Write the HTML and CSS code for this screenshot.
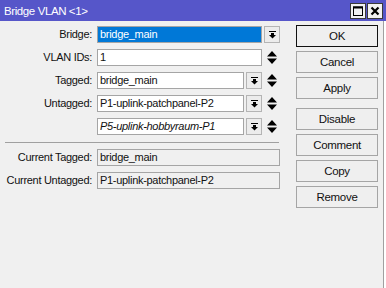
FILE: index.html
```html
<!DOCTYPE html>
<html>
<head>
<meta charset="utf-8">
<link rel="stylesheet" href="styles.css">
</head>
<body>
<div class="window">
  <div class="titlebar">
    <span class="title">Bridge VLAN &lt;1&gt;</span>
    <div class="tbtns">
      <span class="tbtn"><svg width="10" height="10" viewBox="0 0 10 10"><rect x="0.5" y="1" width="9" height="8.5" fill="none" stroke="#000" stroke-width="1"/><rect x="0" y="0.5" width="10" height="2" fill="#000"/></svg></span>
      <span class="tbtn"><svg width="10" height="10" viewBox="0 0 10 10"><path d="M1.5 1.5 L8.5 8.5 M8.5 1.5 L1.5 8.5" stroke="#000" stroke-width="2.2"/></svg></span>
    </div>
  </div>
  <div class="body">
    <div class="form">
      <div class="row">
        <span class="lbl">Bridge:</span>
        <div class="ctrl">
          <div class="field sel">bridge_main</div>
          <span class="dd"><svg width="7" height="8" viewBox="0 0 7 8"><rect x="0" y="0" width="7" height="1" fill="#000"/><rect x="2" y="2" width="3" height="2" fill="#000"/><path d="M0 4 H7 L3.5 7.5 Z" fill="#000"/></svg></span>
        </div>
      </div>
      <div class="row">
        <span class="lbl">VLAN IDs:</span>
        <div class="ctrl">
          <div class="field">1</div>
          <span class="spin"><svg width="10" height="13" viewBox="0 0 10 13"><path d="M0 5.5 L5 0 L10 5.5 Z M0 7.5 L10 7.5 L5 13 Z" fill="#000"/></svg></span>
        </div>
      </div>
      <div class="row">
        <span class="lbl">Tagged:</span>
        <div class="ctrl">
          <div class="field">bridge_main</div>
          <span class="dd"><svg width="7" height="8" viewBox="0 0 7 8"><rect x="0" y="0" width="7" height="1" fill="#000"/><rect x="2" y="2" width="3" height="2" fill="#000"/><path d="M0 4 H7 L3.5 7.5 Z" fill="#000"/></svg></span>
          <span class="spin"><svg width="10" height="13" viewBox="0 0 10 13"><path d="M0 5.5 L5 0 L10 5.5 Z M0 7.5 L10 7.5 L5 13 Z" fill="#000"/></svg></span>
        </div>
      </div>
      <div class="row">
        <span class="lbl">Untagged:</span>
        <div class="ctrl">
          <div class="field">P1-uplink-patchpanel-P2</div>
          <span class="dd"><svg width="7" height="8" viewBox="0 0 7 8"><rect x="0" y="0" width="7" height="1" fill="#000"/><rect x="2" y="2" width="3" height="2" fill="#000"/><path d="M0 4 H7 L3.5 7.5 Z" fill="#000"/></svg></span>
          <span class="spin"><svg width="10" height="13" viewBox="0 0 10 13"><path d="M0 5.5 L5 0 L10 5.5 Z M0 7.5 L10 7.5 L5 13 Z" fill="#000"/></svg></span>
        </div>
      </div>
      <div class="row">
        <span class="lbl"></span>
        <div class="ctrl">
          <div class="field italic">P5-uplink-hobbyraum-P1</div>
          <span class="dd"><svg width="7" height="8" viewBox="0 0 7 8"><rect x="0" y="0" width="7" height="1" fill="#000"/><rect x="2" y="2" width="3" height="2" fill="#000"/><path d="M0 4 H7 L3.5 7.5 Z" fill="#000"/></svg></span>
          <span class="spin"><svg width="10" height="13" viewBox="0 0 10 13"><path d="M0 5.5 L5 0 L10 5.5 Z M0 7.5 L10 7.5 L5 13 Z" fill="#000"/></svg></span>
        </div>
      </div>
      <div class="sep"></div>
      <div class="row">
        <span class="lbl">Current Tagged:</span>
        <div class="ctrl">
          <div class="field ro">bridge_main</div>
        </div>
      </div>
      <div class="row">
        <span class="lbl">Current Untagged:</span>
        <div class="ctrl">
          <div class="field ro">P1-uplink-patchpanel-P2</div>
        </div>
      </div>
    </div>
    <div class="buttons">
      <div class="btn default">OK</div>
      <div class="btn">Cancel</div>
      <div class="btn">Apply</div>
      <div class="btn gap">Disable</div>
      <div class="btn">Comment</div>
      <div class="btn">Copy</div>
      <div class="btn">Remove</div>
    </div>
  </div>
</div>
</body>
</html>
```
FILE: styles.css
```css
html, body {
  margin: 0;
  padding: 0;
  background: #ffffff;
}
body {
  width: 386px;
  height: 288px;
  overflow: hidden;
  font-family: "Liberation Sans", Arial, sans-serif;
  font-size: 11px;
  letter-spacing: -0.3px;
  color: #111;
}
.window {
  width: 386px;
  height: 288px;
  display: flex;
  flex-direction: column;
}
.titlebar {
  height: 21px;
  flex: none;
  background: #5656c9;
  color: #fff;
  display: flex;
  align-items: center;
  padding-left: 4px;
  padding-right: 3px;
}
.title {
  font-size: 11.5px;
  letter-spacing: -0.4px;
}
.tbtns {
  margin-left: auto;
  display: flex;
  gap: 1px;
}
.tbtn {
  width: 16px;
  height: 16px;
  box-sizing: border-box;
  border: 1px solid #3a3a3a;
  background: #f2f2f2;
  display: flex;
  align-items: center;
  justify-content: center;
}
.body {
  width: 384px;
  flex: 1;
  box-sizing: border-box;
  background: #f0f0f0;
  border-right: 1px solid #a0a0a0;
  display: flex;
  align-items: flex-start;
  padding-top: 5px;
}
.form {
  width: 280px;
  display: flex;
  flex-direction: column;
  gap: 6px;
}
.row {
  display: flex;
  height: 17px;
}
.lbl {
  width: 93px;
  flex: none;
  padding-right: 1px;
  box-sizing: border-box;
  text-align: right;
  line-height: 17px;
  white-space: nowrap;
}
.ctrl {
  margin-left: 4px;
  width: 183px;
  display: flex;
  gap: 2px;
}
.field {
  flex: 1;
  height: 17px;
  box-sizing: border-box;
  border: 1px solid #a5a5a5;
  background: #fff;
  padding-left: 2px;
  line-height: 15px;
  white-space: nowrap;
  overflow: hidden;
}
.field.sel {
  background: #0078d7;
  color: #fff;
}
.field.italic {
  font-style: italic;
}
.field.ro {
  background: #f0f0f0;
}
.dd {
  width: 16px;
  height: 17px;
  flex: none;
  box-sizing: border-box;
  border: 1px solid #b4b4b4;
  background: #ececec;
  display: flex;
  align-items: center;
  justify-content: center;
}
.spin {
  width: 16px;
  height: 17px;
  flex: none;
  display: flex;
  align-items: center;
  justify-content: center;
}
.sep {
  margin: 1px 0 0 5px;
  height: 1px;
  width: 274px;
  background: #a0a0a0;
}
.buttons {
  margin-left: 16px;
  margin-top: -1px;
  width: 82px;
  display: flex;
  flex-direction: column;
  gap: 4px;
}
.btn {
  height: 22px;
  box-sizing: border-box;
  border: 1px solid #a5a5a5;
  background: #efefef;
  text-align: center;
  line-height: 20px;
  font-size: 11.5px;
}
.btn.default {
  border-color: #111;
}
.btn.gap {
  margin-top: 5px;
}
```
